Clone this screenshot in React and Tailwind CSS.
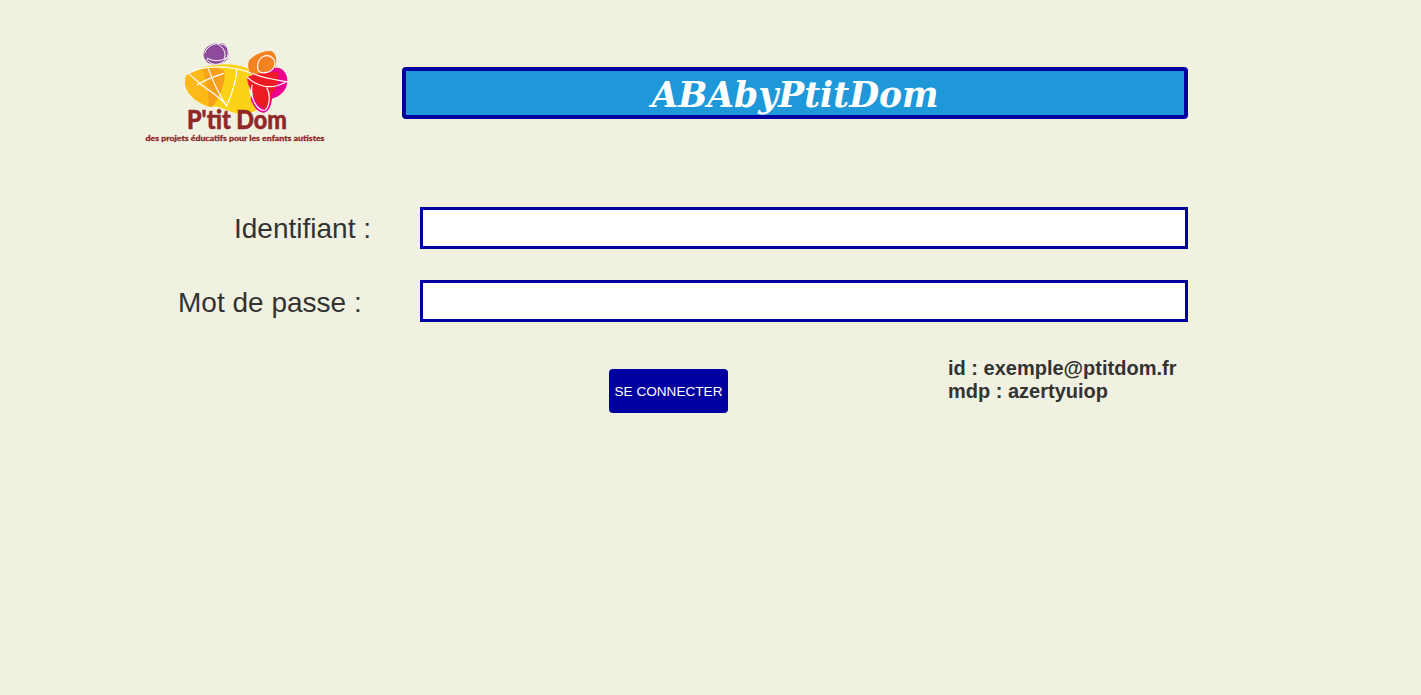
import React from 'react';

const Logo = () => (
  <svg width="210" height="125" viewBox="0 0 630 375" className="block shrink-0">
    {/* yellow body */}
    <path d="M170 135 C205 108 290 92 345 112 C362 120 366 132 360 150 C352 180 362 215 382 238 C360 256 325 256 290 240 C270 232 255 226 235 230 C200 218 165 190 165 155 C165 147 167 140 170 135Z" fill="#fdd116" />
    <path d="M170 135 C190 122 225 112 262 110 C270 130 262 180 240 229 C200 218 165 190 165 155 C165 147 167 140 170 135Z" fill="#fcb918" />
    <path d="M218 118 C240 112 265 112 282 122 C290 150 270 200 248 230 C240 232 238 230 235 229 C240 190 228 150 218 118Z" fill="#f7a01b" />
    {/* purple head */}
    <path d="M222 66 C228 46 254 36 278 40 C296 46 300 70 292 88 C280 104 254 108 236 100 C224 90 218 78 222 66Z" fill="#8e4a9d" />
    <path d="M224 70 C230 44 268 32 288 48 C302 66 294 94 266 102 C250 106 234 98 230 86 M262 42 C282 52 290 70 282 88 M232 84 C250 96 276 94 296 80" fill="none" stroke="#fff" strokeWidth="3" />
    {/* orange head + magenta blob */}
    <path d="M358 90 C372 74 405 60 425 64 C442 72 442 100 432 120 C410 134 380 140 362 132 C354 118 352 102 358 90Z" fill="#f58220" />
    <path d="M432 114 C455 108 472 128 472 152 C472 180 452 198 426 206 C424 224 418 244 402 248 C382 248 368 226 362 206 C376 170 400 130 432 114Z" fill="#ec008c" />
    <path d="M352 142 C372 130 410 126 442 126 C450 146 442 172 426 190 C424 210 418 228 408 236 C390 232 372 212 366 186 C358 172 350 156 352 142Z" fill="#ed1c24" />
    {/* white strokes */}
    <path d="M175 130 C220 104 300 104 365 130 M175 130 L215 165 C240 185 270 198 290 228 C310 182 320 145 320 115 M235 115 C250 160 272 200 290 228 M200 165 C225 150 250 140 282 130" fill="none" stroke="#fff" strokeWidth="3.5" />
    <path d="M398 80 C420 70 442 88 432 112 C422 130 392 134 384 120 C380 102 386 86 398 80Z M350 140 C380 170 422 182 470 155 C440 150 400 146 368 130 M366 165 C360 210 385 246 406 240 C420 226 422 192 410 172" fill="none" stroke="#fff" strokeWidth="3.5" />
    {/* wordmark */}
    <text x="321" y="297" textAnchor="middle" textLength="300" lengthAdjust="spacingAndGlyphs" fill="#90282a" stroke="#90282a" strokeWidth="1.5" fontFamily="Lato, sans-serif" fontWeight="900" fontSize="82">P'tit Dom</text>
    <text x="315" y="333" textAnchor="middle" textLength="537" lengthAdjust="spacingAndGlyphs" fill="#90282a" stroke="#90282a" strokeWidth="0.8" fontFamily="Lato, sans-serif" fontWeight="900" fontSize="24">des projets éducatifs pour les enfants autistes</text>
  </svg>
);

const Field = ({ label, labelClass, type, rowClass }) => (
  <div className={`flex items-center ${rowClass}`}>
    <div className="w-[420px] shrink-0">
      <label className={`block text-[28px] leading-[32px] text-[#333333] ${labelClass}`}>{label}</label>
    </div>
    <input type={type} className="w-[768px] h-[42px] bg-white border-[3px] border-[#0000a0] outline-none" />
  </div>
);

export default function App() {
  return (
    <div className="min-h-[695px] bg-[#f1f1e1] font-['Liberation_Sans',Arial,sans-serif] overflow-hidden">
      <header className="flex items-start pt-[30px] pl-[130px] h-[155px]">
        <Logo />
        <div className="ml-[62px] mt-[37px] w-[786px] h-[52px] flex items-center justify-center bg-[#1e98d9] border-4 border-[#0000a0] rounded-[4px]">
          <h1 className="text-[34.5px] leading-none pt-[4px] font-bold italic text-white font-['DejaVu_Serif',Georgia,serif]">ABAbyPtitDom</h1>
        </div>
      </header>

      <form className="mt-[52px]">
        <Field label="Identifiant :" type="text" labelClass="pt-[2px] pl-[234px]" />
        <Field label="Mot de passe :" type="password" labelClass="pt-[4px] pl-[178px]" rowClass="mt-[31px]" />

        <div className="flex mt-[34px]">
          <div className="w-[609px] shrink-0" />
          <button type="button" className="mt-[13px] w-[119px] h-[44px] pt-[2px] bg-[#0000a0] rounded-[4px] text-white text-[13.6px]">SE CONNECTER</button>
          <p className="ml-[220px] mt-[1px] text-[20px] leading-[23px] font-bold text-[#333333]">
            id : exemple@ptitdom.fr
            <br />
            mdp : azertyuiop
          </p>
        </div>
      </form>
    </div>
  );
}
